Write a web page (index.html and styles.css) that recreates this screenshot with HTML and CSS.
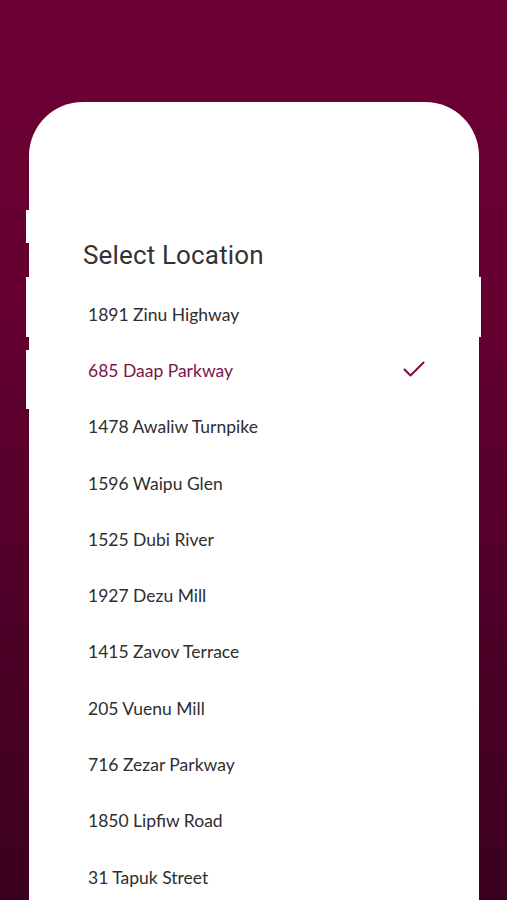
FILE: index.html
```html
<!DOCTYPE html>
<html>
<head>
<meta charset="utf-8">
<link rel="stylesheet" href="styles.css">
</head>
<body>
<div class="stage">
  <div class="phone">
    <span class="btn btn-l1"></span>
    <span class="btn btn-l2"></span>
    <span class="btn btn-l3"></span>
    <span class="btn btn-r1"></span>
    <h1 class="title">Select Location</h1>
    <ul class="list">
      <li class="item">1891 Zinu Highway</li>
      <li class="item selected">685 Daap Parkway
        <svg class="check" width="22" height="16" viewBox="0 0 22 16"><path d="M1.5 8.5 L7.5 14.5 L20.5 1.5" fill="none" stroke="#7a0f45" stroke-width="2" stroke-linecap="round" stroke-linejoin="round"/></svg>
      </li>
      <li class="item">1478 Awaliw Turnpike</li>
      <li class="item">1596 Waipu Glen</li>
      <li class="item">1525 Dubi River</li>
      <li class="item">1927 Dezu Mill</li>
      <li class="item">1415 Zavov Terrace</li>
      <li class="item">205 Vuenu Mill</li>
      <li class="item">716 Zezar Parkway</li>
      <li class="item">1850 Lipfiw Road</li>
      <li class="item">31 Tapuk Street</li>
    </ul>
  </div>
</div>
</body>
</html>
```

FILE: styles.css
```css
html, body {
  margin: 0;
  padding: 0;
  height: 100%;
  overflow: hidden;
}
body {
  background: linear-gradient(180deg, #6d0034 0%, #650031 35%, #4d0027 70%, #3b001f 100%);
}
.stage {
  padding: 102px 28px 0 29px;
  height: 900px;
  box-sizing: border-box;
}
.phone {
  position: relative;
  background: #ffffff;
  height: 798px;
  border-radius: 54px 54px 0 0;
  padding: 138px 54px 0 0;
  box-sizing: border-box;
}
.btn {
  position: absolute;
  width: 4px;
  background: #ffffff;
}
.btn-l1 { left: -3px; top: 108px; height: 33px; }
.btn-l2 { left: -3px; top: 175px; height: 60px; }
.btn-l3 { left: -3px; top: 248px; height: 59px; }
.btn-r1 { right: -2px; top: 175px; height: 60px; }
.title {
  margin: 0 0 16px 54px;
  font-family: Roboto, "Liberation Sans", sans-serif;
  font-weight: 400;
  font-size: 26px;
  line-height: 30px;
  letter-spacing: 0.15px;
  color: #333333;
}
.list {
  list-style: none;
  margin: 0;
  padding: 0 0 0 59px;
}
.item {
  display: flex;
  align-items: center;
  justify-content: space-between;
  height: 56.3px;
  font-family: Lato, "Noto Sans", sans-serif;
  font-size: 17.5px;
  color: #2e2e2e;
}
.item.selected {
  color: #7b1548;
}
.check {
  display: block;
  margin-top: -2px;
}
```
